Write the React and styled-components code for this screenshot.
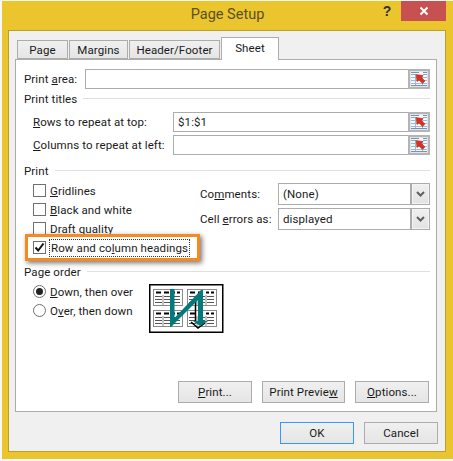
import React from "react";
import styled, { createGlobalStyle } from "styled-components";

const Global = createGlobalStyle`
  html, body { margin: 0; padding: 0; background: #f7f7f7; }
  body { width: 453px; height: 461px; overflow: hidden; }
  * { box-sizing: border-box; }
  u { text-underline-offset: 1px; }
`;

const Win = styled.div`
  width: 451px; height: 458px; margin: 1px 0 0 2px;
  background: #ebc52e; display: flex; flex-direction: column;
  font-family: Roboto, "Noto Sans", sans-serif; font-size: 11.5px; letter-spacing: 0.1px; color: #1a1a1a;
`;
const TitleBar = styled.div`
  height: 29px; flex: none; display: flex; align-items: flex-start;
`;
const Title = styled.div`
  flex: 1; text-align: center; font-size: 14.5px; letter-spacing: 0; line-height: 28px; color: #5a5020; padding-left: 76px;
`;
const Help = styled.div`
  width: 20px; margin-right: 4px; text-align: center; font: bold 14px/20px "Liberation Sans", sans-serif; color: #333;
`;
const Close = styled.div`
  width: 45px; height: 20px; margin-right: 7px; background: #c75050; display: flex; align-items: center; justify-content: center;
`;
const Inner = styled.div`
  width: 438px; height: 422px; margin-left: 6px; background: #f0f0f0; border: 1px solid #b9a02c;
  padding: 6px 7px 0 6px; display: flex; flex-direction: column;
`;
const Tabs = styled.div`
  display: flex; align-items: flex-end; height: 22px; padding-left: 2px; position: relative; z-index: 1;
`;
const Tab = styled.div`
  height: ${p => p.$active ? "23px" : "19px"};
  width: ${p => p.$w}px; margin-right: ${p => p.$active ? 0 : 1}px;
  margin-bottom: ${p => p.$active ? "-1px" : "0"};
  background: ${p => p.$active ? "#fff" : "linear-gradient(#f0f0f0,#e5e5e5)"};
  border: 1px solid #acacac; border-bottom: ${p => p.$active ? "none" : "1px solid #acacac"};
  text-align: center; line-height: ${p => p.$active ? "21px" : "18px"};
`;
const Panel = styled.div`
  width: 422px; height: 353px; flex: none; background: #fff; border: 1px solid #acacac;
  padding: 9px 6px 8px 8px; display: flex; flex-direction: column;
`;
const FieldRow = styled.div`
  display: flex; align-items: center; height: 20px; margin-bottom: ${p => p.$mb || 0}px;
  padding-left: ${p => p.$indent || 0}px;
`;
const FieldLabel = styled.div` flex: 1; white-space: nowrap; padding-bottom: 1px; `;
const Field = styled.div`
  width: ${p => p.$w}px; height: 20px; border: 1px solid #acacac; border-right: none; display: flex; align-items: center; justify-content: space-between;
  padding-left: 4px; line-height: 18px;
`;
const Picker = styled.div`
  width: 22px; height: 20px; flex: none; background: #e4e4e4; border: 2px solid #b4b4b4; display: flex; align-items: center; justify-content: center;
`;
const Section = styled.div`
  display: flex; align-items: center; height: 19px; gap: 6px; margin-top: ${p => p.$mt || 0}px; margin-bottom: ${p => p.$mb || 0}px;
  &::after { content: ""; flex: 1; height: 1px; background: #dfdfdf; }
`;
const PrintGrid = styled.div` display: flex; height: 80px; `;
const Checks = styled.div` width: 176px; padding-left: 9px; display: flex; flex-direction: column; `;
const CheckRow = styled.div`
  display: flex; align-items: center; height: 19px; gap: 4px; white-space: nowrap;
`;
const HighlightRow = styled(CheckRow)`
  height: 27px; margin: -4px -9px 0 -8px; padding-left: 5px; border: 3px solid #f58a1f;
  box-shadow: 2px 2px 5px rgba(0,0,0,.55); background: #fff; width: 175px;
`;
const Box = styled.div`
  width: 13px; height: 13px; flex: none; border: 1px solid #707070; background: #fff; display: flex; align-items: center; justify-content: center;
`;
const Focus = styled.span` outline: 1px dotted #333; outline-offset: 0; padding: 0 1px; line-height: 16px; `;
const Selects = styled.div` flex: 1; padding-top: 2px; display: flex; flex-direction: column; gap: 3px; `;
const SelRow = styled.div` display: flex; align-items: center; height: 22px; `;
const SelLabel = styled.div` width: 78px; padding-left: 0; white-space: nowrap; `;
const Select = styled.div`
  flex: 1; height: 22px; border: 1px solid #acacac; display: flex; align-items: center; padding-left: 4px;
`;
const SelText = styled.div` flex: 1; `;
const SelBtn = styled.div`
  width: 18px; height: 20px; background: linear-gradient(#f0f0f0,#e2e2e2); border-left: 1px solid #acacac; box-shadow: inset 0 0 0 1px #f4f4f4; display: flex; align-items: center; justify-content: center;
  outline: 1px solid #acacac;
`;
const OrderRow = styled.div` display: flex; padding-left: 9px; `;
const Radios = styled.div` width: 116px; padding-top: 1px; display: flex; flex-direction: column; `;
const RadioRow = styled(CheckRow)``;
const Radio = styled.div`
  width: 13px; height: 13px; border-radius: 50%; border: 1px solid #707070; background: #fff; flex: none; display: flex; align-items: center; justify-content: center;
  &::after { content: ""; width: 7px; height: 7px; border-radius: 50%; background: ${p => p.$on ? "#222" : "transparent"}; }
`;
const Diagram = styled.svg` display: block; margin-top: 3px; `;
const ActionRow = styled.div`
  margin-top: auto; margin-right: 1px; display: flex; justify-content: flex-end; gap: 10px;
`;
const Btn = styled.div`
  width: ${p => p.$w}px; height: 22px; text-align: center; line-height: 20px; white-space: nowrap;
  background: linear-gradient(#f0f0f0,#e5e5e5); border: 1px solid ${p => p.$primary ? "#3399ff" : "#acacac"};
`;
const Footer = styled.div` margin-top: 10px; display: flex; justify-content: flex-end; gap: 10px; `;

const PickIcon = () => (
  <svg width="16" height="14" viewBox="0 0 16 14">
    <rect x="0" y="0" width="16" height="14" fill="#f4f7fb" />
    <path d="M0 0.5H8M12 0.5H16" stroke="#6f93bd" />
    <path d="M0 2.5H5M12 2.5H16" stroke="#8aa7c9" />
    <path d="M0 5.5H16M0 8.5H16M0 11.5H16M4.5 3V14M11.5 3V14" stroke="#9db8d8" />
    <path d="M0 13.5H16" stroke="#6f93bd" />
    <path d="M5 2.5L12 3.5L10.5 5.5L14 9L11.5 11.5L8 8L6 9.5Z" fill="#d9301f" stroke="#b5281c" strokeWidth=".5" />
  </svg>
);
const Chev = () => (
  <svg width="9" height="6" viewBox="0 0 9 6"><path d="M1 1L4.5 4.5L8 1" fill="none" stroke="#606060" strokeWidth="2" /></svg>
);
const MiniTable = ({ x, y, h }) => (
  <g transform={`translate(${x} ${y})`}>
    <rect x=".5" y=".5" width="29" height={h} fill="#fff" stroke="#8a8a8a" />
    <path d="M3 3.5H8M11 3.5H16M19 3.5H22M24 3.5H27" stroke="#000" strokeWidth="2" />
    <path d="M2 7.5H9M2 10.5H9M2 13.5H9M11 7.5H18M11 10.5H18M11 13.5H18M20 7.5H27M20 10.5H27M20 13.5H27" stroke="#555" />
    <path d="M10 6V16M19 6V16" stroke="#8a8a8a" />
  </g>
);
const PageOrderArt = () => (
  <Diagram width="75" height="50" viewBox="0 0 75 50">
    <rect x=".75" y=".75" width="73" height="47.5" fill="#fff" stroke="#000" strokeWidth="1.5" />
    <MiniTable x={4} y={5} h={16} />
    <MiniTable x={38} y={5} h={16} />
    <MiniTable x={4} y={26} h={16} />
    <MiniTable x={38} y={26} h={16} />
    <path d="M46.5 14V37M42 38L49 44L56 39" fill="none" stroke="#000" strokeWidth="1.5" />
    <path d="M21 5H25.5V34L52 6H54V37H59L51 42L44 37H49V16L22 43H21Z" fill="#007a7a" />
  </Diagram>
);

export default function App() {
  return (
    <>
      <Global />
      <Win>
        <TitleBar>
          <Title>Page Setup</Title>
          <Help>?</Help>
          <Close>
            <svg width="10" height="10" viewBox="0 0 10 10"><path d="M1.5 1.5L8.5 8.5M8.5 1.5L1.5 8.5" stroke="#fff" strokeWidth="2" /></svg>
          </Close>
        </TitleBar>
        <Inner>
          <Tabs>
            <Tab $w={51}>Page</Tab>
            <Tab $w={59}>Margins</Tab>
            <Tab $w={91}>Header/Footer</Tab>
            <Tab $w={58} $active>Sheet</Tab>
          </Tabs>
          <Panel>
            <FieldRow>
              <FieldLabel>Print <u>a</u>rea:</FieldLabel>
              <Field $w={323} />
              <Picker><PickIcon /></Picker>
            </FieldRow>
            <Section $mb={4}>Print titles</Section>
            <FieldRow $indent={9} $mb={3}>
              <FieldLabel><u>R</u>ows to repeat at top:</FieldLabel>
              <Field $w={235}>$1:$1</Field>
              <Picker><PickIcon /></Picker>
            </FieldRow>
            <FieldRow $indent={9}>
              <FieldLabel><u>C</u>olumns to repeat at left:</FieldLabel>
              <Field $w={235} />
              <Picker><PickIcon /></Picker>
            </FieldRow>
            <Section $mt={6} $mb={1}>Print</Section>
            <PrintGrid>
              <Checks>
                <CheckRow><Box /><span><u>G</u>ridlines</span></CheckRow>
                <CheckRow><Box /><span><u>B</u>lack and white</span></CheckRow>
                <CheckRow><Box /><span>Draft <u>q</u>uality</span></CheckRow>
                <HighlightRow>
                  <Box>
                    <svg width="11" height="11" viewBox="0 0 11 11"><path d="M1.5 5.5L4.2 8.5L9.5 1.5" fill="none" stroke="#111" strokeWidth="2" /></svg>
                  </Box>
                  <Focus>Row and co<u>l</u>umn headings</Focus>
                </HighlightRow>
              </Checks>
              <Selects>
                <SelRow>
                  <SelLabel>Co<u>m</u>ments:</SelLabel>
                  <Select><SelText>(None)</SelText><SelBtn><Chev /></SelBtn></Select>
                </SelRow>
                <SelRow>
                  <SelLabel>Cell <u>e</u>rrors as:</SelLabel>
                  <Select><SelText>displayed</SelText><SelBtn><Chev /></SelBtn></Select>
                </SelRow>
              </Selects>
            </PrintGrid>
            <Section $mt={1}>Page order</Section>
            <OrderRow>
              <Radios>
                <RadioRow><Radio $on /><span><u>D</u>own, then over</span></RadioRow>
                <RadioRow><Radio /><span>O<u>v</u>er, then down</span></RadioRow>
              </Radios>
              <PageOrderArt />
            </OrderRow>
            <ActionRow>
              <Btn $w={74}><u>P</u>rint...</Btn>
              <Btn $w={83}>Print Previe<u>w</u></Btn>
              <Btn $w={74}><u>O</u>ptions...</Btn>
            </ActionRow>
          </Panel>
          <Footer>
            <Btn $w={74} $primary>OK</Btn>
            <Btn $w={74}>Cancel</Btn>
          </Footer>
        </Inner>
      </Win>
    </>
  );
}
